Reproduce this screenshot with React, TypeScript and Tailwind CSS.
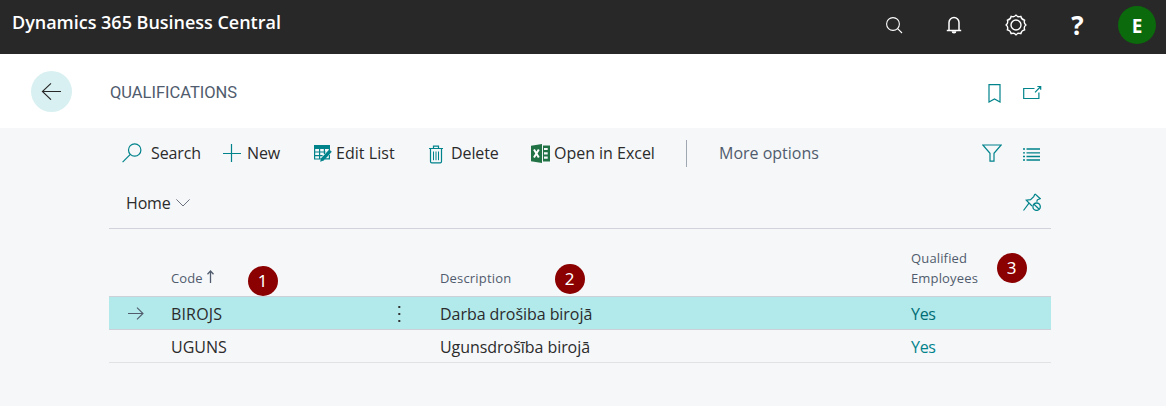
import React from 'react';

const teal = '#00838b';

function Svg({ w, h, className = '', children }: { w: number; h: number; className?: string; children: React.ReactNode }) {
  return (
    <svg width={w} height={h} viewBox={`0 0 ${w} ${h}`} fill="none" className={`shrink-0 ${className}`}>
      {children}
    </svg>
  );
}

function TopBar() {
  return (
    <header className="flex h-[54px] items-start justify-between bg-[#282828] pl-3 text-white">
      <h1 className="mt-[9px] whitespace-nowrap text-[18px] leading-[26px] font-semibold tracking-[-0.02px]">Dynamics 365 Business Central</h1>
      <div className="flex h-[50px] items-center pr-[10px]">
        <Svg w={18} h={18} className="mr-[42px]">
          <circle cx="7" cy="8" r="6.4" stroke="#fff" strokeWidth="1.1" />
          <path d="M11.6 12.6L16 17" stroke="#fff" strokeWidth="1.1" />
        </Svg>
        <Svg w={16} h={18} className="mr-[43px]">
          <path d="M3 14.5V6.5a5 5 0 0 1 10 0v8M.8 14.6h14.4" stroke="#fff" strokeWidth="1.5" />
          <path d="M5.6 15.2a2.4 2.4 0 0 0 4.8 0z" fill="#fff" />
        </Svg>
        <Svg w={22} h={22} className="mr-[45px]">
          <path
            d="M11 1Q12.6 3.6 15.9 2.3 16.3 5.6 19.7 6.1 18.4 9.2 21 11 18.4 12.8 19.7 15.9 16.3 16.4 15.9 19.7 12.6 18.4 11 21 9.4 18.4 6.1 19.7 5.7 16.4 2.3 15.9 3.6 12.8 1 11 3.6 9.2 2.3 6.1 5.7 5.6 6.1 2.3 9.4 3.6 11 1z"
            stroke="#fff"
            strokeWidth="1.4"
            strokeLinejoin="round"
          />
          <circle cx="11" cy="11" r="5" stroke="#fff" strokeWidth="1.4" />
        </Svg>
        <span className="mr-[35px] flex w-[11px] justify-center text-[26px] leading-[40px] font-bold">?</span>
        <span className="flex size-[38px] items-center justify-center rounded-full bg-[#0b6a0b] pt-[2px] text-[19px] font-bold">E</span>
      </div>
    </header>
  );
}

function PageHeader() {
  return (
    <div className="flex h-[74px] items-center bg-white pl-[31px]">
      <button className="flex size-[41px] items-center justify-center rounded-full bg-[#d8f0f1]">
        <Svg w={20} h={18} className="-ml-[2px]">
          <path d="M1.2 9.5H20M10 1.3L1.4 9.5l8.6 8.2" stroke="#282828" strokeWidth="1.1" />
        </Svg>
      </button>
      <h2 className="ml-[38px] w-[877px] pt-[4px] font-[Roboto,sans-serif] text-[16.5px] tracking-[-0.02px] text-[#505c6d]">QUALIFICATIONS</h2>
      <Svg w={13} h={19} className="ml-px mt-1">
        <path d="M1 .7h11V18l-5.5-3L1 18z" stroke={teal} strokeWidth="1.2" />
      </Svg>
      <Svg w={19} h={15} className="ml-[22px] mt-[2px]">
        <path d="M11.5 3.5H.7v10h15.2V7.5M12 7.3L17.2 2M14.4 1.5h3.3v3.3" stroke={teal} strokeWidth="1.2" />
      </Svg>
    </div>
  );
}

function Action({ icon, label, className, textClass }: { icon: React.ReactNode; label: string; className: string; textClass: string }) {
  return (
    <button className={`flex shrink-0 items-center whitespace-nowrap ${className}`}>
      {icon}
      <span className={textClass}>{label}</span>
    </button>
  );
}

function ActionBar() {
  return (
    <div className="flex h-[50px] items-center pl-[13px]">
      <Action
        className="w-[101px] gap-[9px]"
        textClass="tracking-[-0.1px]"
        label="Search"
        icon={
          <Svg w={20} h={20}>
            <circle cx="12.7" cy="7" r="6.2" stroke={teal} strokeWidth="1.2" />
            <path d="M8.3 11.4L.6 19.2" stroke={teal} strokeWidth="1.2" />
          </Svg>
        }
      />
      <Action
        className="w-[91px] gap-[6px]"
        textClass="tracking-[-0.1px]"
        label="New"
        icon={
          <Svg w={18} h={18}>
            <path d="M0 9.5h18M8.5 0v18" stroke={teal} strokeWidth="1.2" />
          </Svg>
        }
      />
      <Action
        className="w-[115px] gap-[4px]"
        textClass="tracking-[0.05px]"
        label="Edit List"
        icon={
          <Svg w={18} h={18}>
            <path d="M0 1h16v4H0z" fill={teal} />
            <path d="M.6 4v11H8M.6 8h11M.6 11.6h8M5.6 5v10M10.4 5v5M15.4 4v2" stroke={teal} strokeWidth="1.2" />
            <path d="M15.2 5.4l2.6 2.3-8 8.8-3.7 1.3 1-3.6z" fill={teal} />
            <path d="M11 14.8h4.4v-4" stroke={teal} strokeWidth="1.2" />
          </Svg>
        }
      />
      <Action
        className="w-[102px] gap-[8px]"
        textClass="tracking-[-0.1px]"
        label="Delete"
        icon={
          <Svg w={14} h={19} className="mt-[2px]">
            <path d="M0 3.5h14M4.5 3V1.1h5V3M1.5 3.5v13q0 1.3 1.3 1.3h8.4q1.3 0 1.3-1.3v-13" stroke={teal} strokeWidth="1.2" />
            <path d="M4.5 6.5v8.7M7 6.5v8.7M9.5 6.5v8.7" stroke={teal} strokeWidth="1" />
          </Svg>
        }
      />
      <Action
        className="w-[155px] gap-[4px]"
        textClass="tracking-[-0.02px]"
        label="Open in Excel"
        icon={
          <Svg w={19} h={19}>
            <path d="M0 1.7L11 0v19L0 17.3z" fill="#217346" />
            <path d="M12 1.5h7v16h-7z" fill="#217346" />
            <path d="M13 5h3.7M13 9.3h3.7M13 13.7h3.7" stroke="#f6f7f9" strokeWidth="2.2" />
            <path d="M3 5.5l4.8 8M7.8 5.5l-4.8 8" stroke="#fff" strokeWidth="2" />
          </Svg>
        }
      />
      <div className="h-[27px] w-px shrink-0 bg-[#9fa7b2]" />
      <button className="ml-[32px] w-[263px] shrink-0 text-left text-[#505c6d]">More options</button>
      <Svg w={20} h={18}>
        <path d="M.8 1h18.4L12 9.3v7.8H8V9.3z" stroke={teal} strokeWidth="1.2" />
      </Svg>
      <Svg w={17} h={13} className="ml-[21px] mt-[2px]">
        <path d="M0 1h2M3.5 1H17M0 4.8h2M3.5 4.8H17M0 8.5h2M3.5 8.5H17M0 12h2M3.5 12H17" stroke={teal} strokeWidth="1.3" />
      </Svg>
    </div>
  );
}

function TabBar() {
  return (
    <div className="flex h-[51px] items-center justify-between border-b border-[#d0d3da] pl-[17px] pr-[10px]">
      <button className="flex items-center gap-[5px]">
        <span className="pb-px tracking-[-0.15px]">Home</span>
        <Svg w={14} h={8}>
          <path d="M.4.4L7 7 13.6.4" stroke="#6b7280" strokeWidth="1" />
        </Svg>
      </button>
      <Svg w={18} h={18} className="-mt-[2px]">
        <path
          d="M12 .9l5.2 4.8-2.8 1M12 .9L10.7 3.6 7.6 6.7 3.3 7.2 9 13M6 10.2L.5 17.5M14.4 6.7l-.7 2"
          stroke={teal}
          strokeWidth="1.2"
        />
        <circle cx="13.6" cy="13.7" r="3.7" stroke={teal} strokeWidth="1.3" />
        <path d="M11 11.2l5.2 5" stroke={teal} strokeWidth="1.2" />
      </Svg>
    </div>
  );
}

function Badge({ n, className }: { n: number; className: string }) {
  return (
    <span className={`absolute flex size-[30px] items-center justify-center rounded-full bg-[#8b0000] pb-px font-['Noto_Sans',sans-serif] text-[17px] leading-none text-white ${className}`}>
      {n}
    </span>
  );
}

const cols = 'grid grid-cols-[62px_216px_53px_471px_140px]';

function Table() {
  return (
    <section>
      <div className={`${cols} relative h-[67px] items-end pb-[8px] text-[13px] leading-[20px] text-[#505c6d]`}>
        <span />
        <span className="flex items-center gap-[4px]">
          <span className="tracking-[0.1px]">Code</span>
          <Svg w={7} h={13} className="-mt-[3px]">
            <path d="M3.5 13V1M.5 4.2l3-3.2 3 3.2" stroke="#505c6d" strokeWidth="1.3" />
          </Svg>
        </span>
        <span />
        <span className="tracking-[0.18px]">Description</span>
        <span className="tracking-[0.15px]">
          Qualified
          <br />
          Employees
        </span>
        <Badge n={1} className="left-[138.5px] top-[36.5px]" />
        <Badge n={2} className="left-[445.5px] top-[34.5px]" />
        <Badge n={3} className="left-[887.5px] top-[23.5px]" />
      </div>
      <div className={`${cols} h-[34px] items-center border-y border-[#cdd0d6] bg-[#b2e9eb]`}>
        <Svg w={16} h={13} className="ml-[19px]">
          <path d="M0 6.5h15M9 .6l6 5.9-6 5.9" stroke="#505c6d" strokeWidth="1.1" />
        </Svg>
        <span className="pt-px tracking-[0.15px]">BIROJS</span>
        <Svg w={3} h={18} className="ml-[11px] mt-px">
          <path d="M.3 1h2v2h-2zM.3 8h2v2h-2zM.3 15h2v2h-2z" fill="#333" />
        </Svg>
        <span className="pt-px tracking-[-0.05px]">Darba drošiba birojā</span>
        <span className="pt-px tracking-[-0.3px] text-[#006d74]">Yes</span>
      </div>
      <div className={`${cols} h-[33px] items-center border-b border-[#e0e3e6]`}>
        <span />
        <span className="pt-px">UGUNS</span>
        <span />
        <span className="pt-px tracking-[-0.05px]">Ugunsdrošība birojā</span>
        <span className="pt-px tracking-[-0.3px] text-[#00838b]">Yes</span>
      </div>
    </section>
  );
}

export default function App() {
  return (
    <div className="h-[406px] w-[1166px] overflow-hidden bg-[#f6f7f9] font-['Open_Sans','Noto_Sans',sans-serif] text-[16px] text-[#2b2b2b]">
      <TopBar />
      <PageHeader />
      <main className="ml-[109px] w-[942px]">
        <ActionBar />
        <TabBar />
        <Table />
      </main>
    </div>
  );
}
